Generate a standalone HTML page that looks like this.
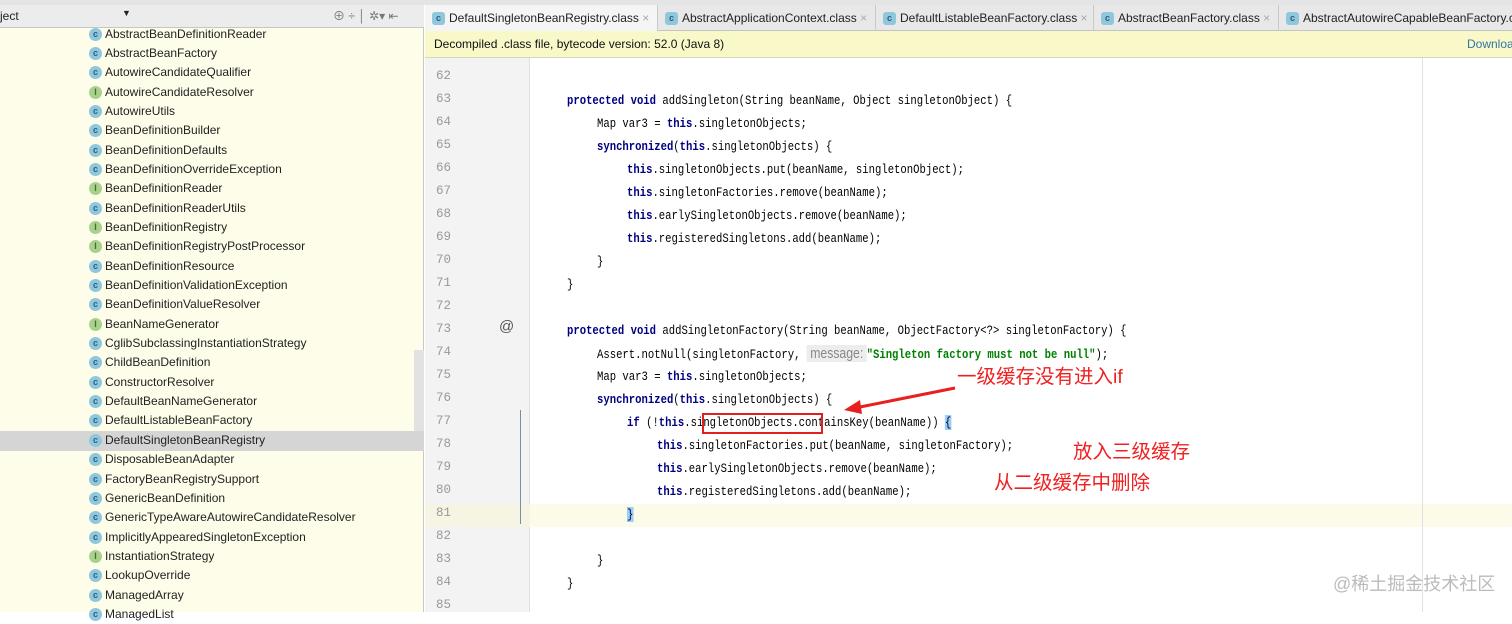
<!DOCTYPE html>
<html><head><meta charset="utf-8"><style>
*{margin:0;padding:0;box-sizing:border-box}
body{width:1512px;height:612px;overflow:hidden;background:#fff;font-family:"Liberation Sans","Noto Sans CJK SC",sans-serif;position:relative}
.abs{position:absolute}
#left{left:0;top:0;width:424px;height:612px;background:#fdfde9;border-right:1px solid #c8c8c8}
#lhead{left:0;top:5px;width:424px;height:23px;background:#ececec;border-bottom:1px solid #c6c6c6;font-size:12px;color:#222}
.row{position:absolute;left:0;width:414px;height:19px;font-size:12px;color:#222;line-height:19px;padding-left:105px}
.ic{position:absolute;left:89px;top:3px;width:13px;height:13px;border-radius:50%;background:#8fc7dd;font-size:9px;line-height:13px;text-align:center;color:#2d5e7d;font-weight:bold}
.ic.i{background:#a9d18e;color:#4b6b2c}
.tab{position:absolute;top:5px;height:26px;font-size:12px;line-height:26px;color:#222;border-right:1px solid #c9c9c9;padding-left:24px}
.tab .ic{left:7px;top:7px;border-radius:3px}
.ln{position:absolute;left:425px;width:26px;text-align:right;font-family:"Liberation Mono",monospace;font-size:12.5px;color:#999}
.code{position:absolute;font-family:"Liberation Mono","Noto Sans CJK SC",monospace;font-size:13px;color:#000;white-space:pre;line-height:23px;transform:scaleX(0.815);transform-origin:0 0}
.k{color:#000080;font-weight:bold}
.s{color:#008000;font-weight:bold}
.red{color:#f02020;font-size:19.5px;position:absolute;font-family:"Liberation Sans","Noto Sans CJK SC",sans-serif}
</style></head><body>
<div id="left" class="abs"></div>
<div class="abs" style="left:0;top:0;width:1512px;height:5px;background:#e4e4e4"></div>
<div id="lhead" class="abs"><span style="position:absolute;left:0;top:4px">ject</span><span style="position:absolute;left:122px;top:3px;font-size:9px">▼</span><span style="position:absolute;left:333px;top:2px;color:#777">⊕ ÷ │ ✲▾ ⇤</span></div>
<div class="abs" style="left:414px;top:350px;width:10px;height:101px;background:#e2e2e2"></div>
<div class="abs" style="left:0;top:431px;width:424px;height:20px;background:#d5d5d5"></div>

<div class="row" style="top:25px"><span class="ic">c</span>AbstractBeanDefinitionReader</div>
<div class="row" style="top:44px"><span class="ic">c</span>AbstractBeanFactory</div>
<div class="row" style="top:63px"><span class="ic">c</span>AutowireCandidateQualifier</div>
<div class="row" style="top:83px"><span class="ic i">I</span>AutowireCandidateResolver</div>
<div class="row" style="top:102px"><span class="ic">c</span>AutowireUtils</div>
<div class="row" style="top:121px"><span class="ic">c</span>BeanDefinitionBuilder</div>
<div class="row" style="top:141px"><span class="ic">c</span>BeanDefinitionDefaults</div>
<div class="row" style="top:160px"><span class="ic">c</span>BeanDefinitionOverrideException</div>
<div class="row" style="top:179px"><span class="ic i">I</span>BeanDefinitionReader</div>
<div class="row" style="top:199px"><span class="ic">c</span>BeanDefinitionReaderUtils</div>
<div class="row" style="top:218px"><span class="ic i">I</span>BeanDefinitionRegistry</div>
<div class="row" style="top:237px"><span class="ic i">I</span>BeanDefinitionRegistryPostProcessor</div>
<div class="row" style="top:257px"><span class="ic">c</span>BeanDefinitionResource</div>
<div class="row" style="top:276px"><span class="ic">c</span>BeanDefinitionValidationException</div>
<div class="row" style="top:295px"><span class="ic">c</span>BeanDefinitionValueResolver</div>
<div class="row" style="top:315px"><span class="ic i">I</span>BeanNameGenerator</div>
<div class="row" style="top:334px"><span class="ic">c</span>CglibSubclassingInstantiationStrategy</div>
<div class="row" style="top:353px"><span class="ic">c</span>ChildBeanDefinition</div>
<div class="row" style="top:373px"><span class="ic">c</span>ConstructorResolver</div>
<div class="row" style="top:392px"><span class="ic">c</span>DefaultBeanNameGenerator</div>
<div class="row" style="top:411px"><span class="ic">c</span>DefaultListableBeanFactory</div>
<div class="row" style="top:431px"><span class="ic">c</span>DefaultSingletonBeanRegistry</div>
<div class="row" style="top:450px"><span class="ic">c</span>DisposableBeanAdapter</div>
<div class="row" style="top:470px"><span class="ic">c</span>FactoryBeanRegistrySupport</div>
<div class="row" style="top:489px"><span class="ic">c</span>GenericBeanDefinition</div>
<div class="row" style="top:508px"><span class="ic">c</span>GenericTypeAwareAutowireCandidateResolver</div>
<div class="row" style="top:528px"><span class="ic">c</span>ImplicitlyAppearedSingletonException</div>
<div class="row" style="top:547px"><span class="ic i">I</span>InstantiationStrategy</div>
<div class="row" style="top:566px"><span class="ic">c</span>LookupOverride</div>
<div class="row" style="top:586px"><span class="ic">c</span>ManagedArray</div>
<div class="row" style="top:605px"><span class="ic">c</span>ManagedList</div>

<div class="abs" style="left:425px;top:5px;width:1087px;height:26px;background:#e8e8e8;border-bottom:1px solid #c4c4c4"></div>
<div class="tab" style="left:425px;width:233px;background:#f5f5f5"><span class="ic">c</span>DefaultSingletonBeanRegistry.class <span style="color:#aaa">×</span></div>
<div class="tab" style="left:658px;width:218px"><span class="ic">c</span>AbstractApplicationContext.class <span style="color:#aaa">×</span></div>
<div class="tab" style="left:876px;width:218px"><span class="ic">c</span>DefaultListableBeanFactory.class <span style="color:#aaa">×</span></div>
<div class="tab" style="left:1094px;width:185px"><span class="ic">c</span>AbstractBeanFactory.class <span style="color:#aaa">×</span></div>
<div class="tab" style="left:1279px;width:240px;border:none"><span class="ic">c</span>AbstractAutowireCapableBeanFactory.class</div>
<div class="abs" style="left:425px;top:31px;width:1087px;height:27px;background:#f8f8c9;border-bottom:1px solid #d8d8b0;font-size:12px;line-height:27px;padding-left:9px;color:#111">Decompiled .class file, bytecode version: 52.0 (Java 8)<span style="position:absolute;left:1042px;color:#3574a8">Download</span></div>

<div class="abs" style="left:425px;top:58px;width:105px;height:554px;background:#f3f3f3;border-right:1px solid #e0e0e0"></div>
<div class="abs" style="left:425px;top:504px;width:1087px;height:23px;background:#fcfae9"></div>
<div class="abs" style="left:425px;top:504px;width:105px;height:23px;background:#f6f4e2"></div>
<div class="abs" style="left:520px;top:410px;width:1px;height:114px;background:#7090b0"></div>
<div class="abs" style="left:1422px;top:58px;width:1px;height:554px;background:#e2e2e2"></div>
<div class="abs" style="left:499px;top:318px;font-size:15px;color:#555">@</div>

<div class="ln" style="top:69px">62</div><div class="ln" style="top:92px">63</div><div class="ln" style="top:115px">64</div><div class="ln" style="top:138px">65</div><div class="ln" style="top:161px">66</div><div class="ln" style="top:184px">67</div><div class="ln" style="top:207px">68</div><div class="ln" style="top:230px">69</div><div class="ln" style="top:253px">70</div><div class="ln" style="top:276px">71</div><div class="ln" style="top:299px">72</div><div class="ln" style="top:322px">73</div><div class="ln" style="top:345px">74</div><div class="ln" style="top:368px">75</div><div class="ln" style="top:391px">76</div><div class="ln" style="top:414px">77</div><div class="ln" style="top:437px">78</div><div class="ln" style="top:460px">79</div><div class="ln" style="top:483px">80</div><div class="ln" style="top:506px">81</div><div class="ln" style="top:529px">82</div><div class="ln" style="top:552px">83</div><div class="ln" style="top:575px">84</div><div class="ln" style="top:598px">85</div>

<div class="code" style="left:567px;top:89px"><span class="k">protected void</span> addSingleton(String beanName, Object singletonObject) {</div>
<div class="code" style="left:597px;top:112px">Map var3 = <span class="k">this</span>.singletonObjects;</div>
<div class="code" style="left:597px;top:135px"><span class="k">synchronized</span>(<span class="k">this</span>.singletonObjects) {</div>
<div class="code" style="left:627px;top:158px"><span class="k">this</span>.singletonObjects.put(beanName, singletonObject);</div>
<div class="code" style="left:627px;top:181px"><span class="k">this</span>.singletonFactories.remove(beanName);</div>
<div class="code" style="left:627px;top:204px"><span class="k">this</span>.earlySingletonObjects.remove(beanName);</div>
<div class="code" style="left:627px;top:227px"><span class="k">this</span>.registeredSingletons.add(beanName);</div>
<div class="code" style="left:597px;top:250px">}</div>
<div class="code" style="left:567px;top:273px">}</div>
<div class="code" style="left:567px;top:319px"><span class="k">protected void</span> addSingletonFactory(String beanName, ObjectFactory&lt;?&gt; singletonFactory) {</div>
<div class="code" style="left:597px;top:342px">Assert.notNull(singletonFactory, <span style="background:#ededed;color:#888;font-family:'Liberation Sans',sans-serif;font-size:15px"> message: </span><span class="s">"Singleton factory must not be null"</span>);</div>
<div class="code" style="left:597px;top:365px">Map var3 = <span class="k">this</span>.singletonObjects;</div>
<div class="code" style="left:597px;top:388px"><span class="k">synchronized</span>(<span class="k">this</span>.singletonObjects) {</div>
<div class="code" style="left:627px;top:411px"><span class="k">if</span> (!<span class="k">this</span>.singletonObjects.containsKey(beanName)) <span style="background:#99ccff">{</span></div>
<div class="code" style="left:657px;top:434px"><span class="k">this</span>.singletonFactories.put(beanName, singletonFactory);</div>
<div class="code" style="left:657px;top:457px"><span class="k">this</span>.earlySingletonObjects.remove(beanName);</div>
<div class="code" style="left:657px;top:480px"><span class="k">this</span>.registeredSingletons.add(beanName);</div>
<div class="code" style="left:627px;top:503px"><span style="background:#99ccff">}</span></div>
<div class="code" style="left:597px;top:549px">}</div>
<div class="code" style="left:567px;top:572px">}</div>

<div class="abs" style="left:702px;top:413px;width:121px;height:21px;border:2px solid #e02020"></div>
<svg class="abs" style="left:840px;top:385px" width="120" height="30"><line x1="115" y1="3" x2="15" y2="23" stroke="#e82020" stroke-width="3"/><polygon points="4,25 20,15 22,29" fill="#e82020"/></svg>
<div class="red" style="left:957px;top:360px">一级缓存没有进入if</div>
<div class="red" style="left:1073px;top:435px">放入三级缓存</div>
<div class="red" style="left:994px;top:466px">从二级缓存中删除</div>
<div class="abs" style="left:1333px;top:570px;font-size:18px;color:#bbb">@稀土掘金技术社区</div>
</body></html>
